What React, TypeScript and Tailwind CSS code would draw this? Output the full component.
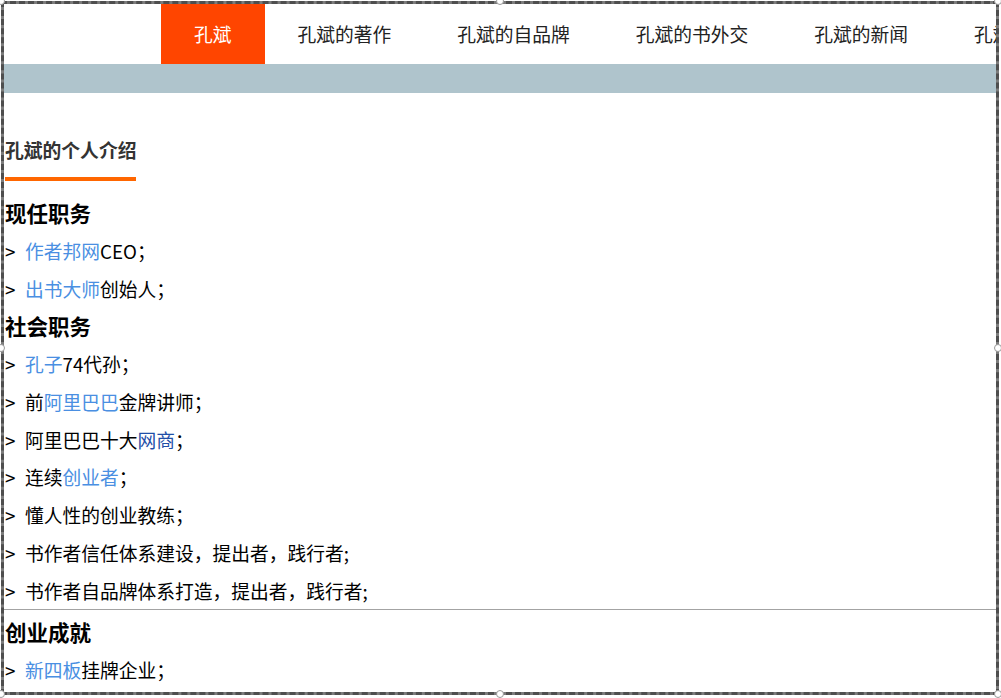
import React from "react";

type Part = { text: string; link?: "light" | "dark" };

const tabs = ["孔斌", "孔斌的著作", "孔斌的自品牌", "孔斌的书外交", "孔斌的新闻", "孔斌的视频"];

const current: Part[][] = [
  [{ text: "作者邦网", link: "light" }, { text: "CEO；" }],
  [{ text: "出书大师", link: "light" }, { text: "创始人；" }],
];

const social: Part[][] = [
  [{ text: "孔子", link: "light" }, { text: "74代孙；" }],
  [{ text: "前" }, { text: "阿里巴巴", link: "light" }, { text: "金牌讲师；" }],
  [{ text: "阿里巴巴十大" }, { text: "网商", link: "dark" }, { text: "；" }],
  [{ text: "连续" }, { text: "创业者", link: "light" }, { text: "；" }],
  [{ text: "懂人性的创业教练；" }],
  [{ text: "书作者信任体系建设，提出者，践行者;" }],
  [{ text: "书作者自品牌体系打造，提出者，践行者;" }],
];

const achievements: Part[][] = [
  [{ text: "新四板", link: "light" }, { text: "挂牌企业；" }],
  [{ text: "作者邦", link: "light" }, { text: "平台上线；" }],
];

function Row({ parts }: { parts: Part[] }) {
  return (
    <p className="flex h-[37.75px] leading-[37.75px] whitespace-nowrap text-black">
      <span className="w-[20px] shrink-0">&gt;</span>
      <span>
        {parts.map((p, i) =>
          p.link ? (
            <a
              key={i}
              href="#"
              className={p.link === "dark" ? "text-[#1f4fa8]" : "text-[#4a8fe2]"}
            >
              {p.text}
            </a>
          ) : (
            <span key={i}>{p.text}</span>
          )
        )}
      </span>
    </p>
  );
}

function Heading({ children }: { children: React.ReactNode }) {
  return (
    <h3 className="h-[37.75px] leading-[37.75px] text-[21.5px] font-bold text-black">
      {children}
    </h3>
  );
}

function Handle({ className }: { className: string }) {
  return (
    <span
      className={`absolute w-[8px] h-[8px] rounded-full bg-white border border-[#9a9a9a] ${className}`}
    />
  );
}

export default function App() {
  return (
    <div
      className="relative w-[1001px] h-[698px] overflow-hidden bg-white"
      style={{ fontFamily: '"Noto Sans CJK SC", "Noto Sans", sans-serif' }}
    >
      <div className="pt-[4px] pl-[4px] w-[997px] text-[18.75px]">
        <nav className="h-[60px] pl-[157px] flex overflow-hidden">
          {tabs.map((t, i) => (
            <a
              key={t}
              href="#"
              className={`shrink-0 h-full px-[33px] flex items-center whitespace-nowrap ${
                i === 0 ? "bg-[#ff4500] text-white" : "text-[#222]"
              }`}
            >
              {t}
            </a>
          ))}
        </nav>
        <div className="h-[29px] bg-[#afc4cc]" />

        <section className="pl-[1px] flex flex-col items-start">
          <div className="mt-[42px] border-b-4 border-[#ff6600] pb-[12px]">
            <h2 className="h-[30px] leading-[30px] text-[18.8px] font-bold text-[#333]">
              孔斌的个人介绍
            </h2>
          </div>

          <div className="mt-[13px]">
            <Heading>现任职务</Heading>
            {current.map((r, i) => (
              <Row key={i} parts={r} />
            ))}
            <Heading>社会职务</Heading>
            {social.map((r, i) => (
              <Row key={i} parts={r} />
            ))}
          </div>
        </section>

        <hr className="border-0 border-t border-[#a3a3a3]" />

        <section className="pl-[1px] mt-[3px]">
          <Heading>创业成就</Heading>
          {achievements.map((r, i) => (
            <Row key={i} parts={r} />
          ))}
        </section>
      </div>

      {/* selection frame drawn over the page */}
      <div className="absolute top-[1px] left-[1px] right-[2px] bottom-[3px] border-[3px] border-[#7c7c7c] pointer-events-none" />
      <div className="absolute top-[1px] left-[1px] right-[2px] bottom-[3px] border-[3px] border-dashed border-[#4e4e4e] pointer-events-none" />
      <Handle className="top-[-3px] left-[-3px]" />
      <Handle className="top-[-3px] left-[496px]" />
      <Handle className="top-[-3px] left-[994px]" />
      <Handle className="top-[344px] left-[-3px]" />
      <Handle className="top-[344px] left-[994px]" />
      <Handle className="top-[690px] left-[-3px]" />
      <Handle className="top-[690px] left-[496px]" />
      <Handle className="top-[690px] left-[994px]" />
    </div>
  );
}
